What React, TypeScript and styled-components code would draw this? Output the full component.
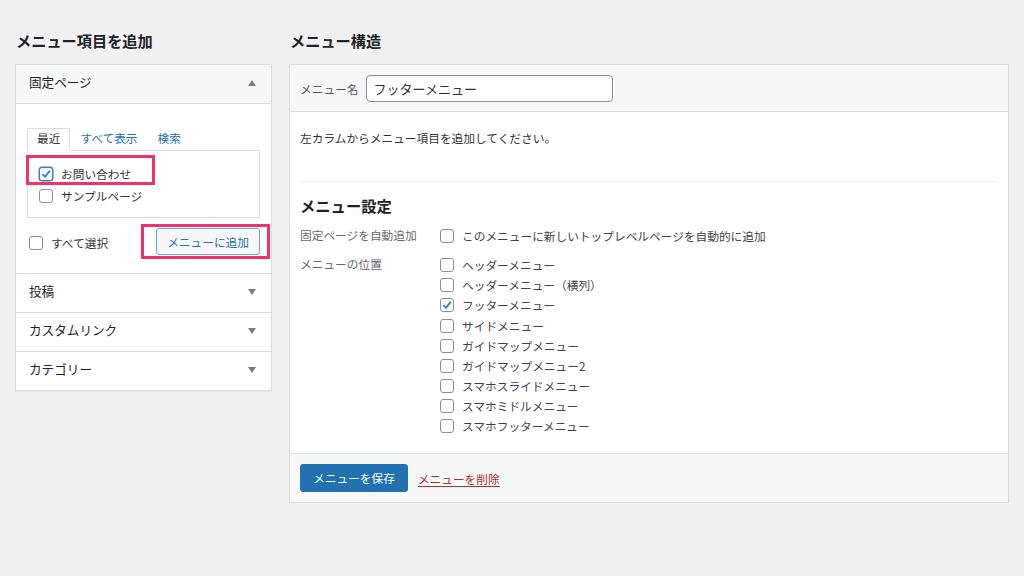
import styled, { createGlobalStyle } from "styled-components";

const GlobalStyle = createGlobalStyle`
  body {
    margin: 0;
    background: #f0f0f1;
    font-family: "Noto Sans CJK JP", "Noto Sans", sans-serif;
    color: #2c3338;
    font-size: 11.7px;
  }
`;

const Page = styled.div`
  display: flex;
  align-items: flex-start;
  gap: 17px;
  padding: 29px 0 0 15px;
`;

const Column = styled.div<{ $width: number }>`
  flex: none;
  width: ${(p) => p.$width}px;
`;

const Heading = styled.h2`
  margin: 0 0 13px;
  padding-left: 1px;
  font-size: 15.2px;
  line-height: 22px;
  font-weight: 600;
  color: #1d2327;
`;

const Panel = styled.div`
  background: #fff;
  border: 1px solid #dcdcde;
  box-shadow: 0 1px 1px rgba(0, 0, 0, 0.04);
`;

/* left column: accordion */

const SectionHeader = styled.div<{ $open?: boolean }>`
  box-sizing: border-box;
  display: flex;
  align-items: center;
  justify-content: space-between;
  height: ${(p) => (p.$open ? 39 : 39)}px;
  padding: 0 15px 4px 13px;
  font-size: 12.6px;
  line-height: 18px;
  color: #1d2327;
  background: ${(p) => (p.$open ? "#f6f7f7" : "#fff")};
  border-top: ${(p) => (p.$open ? "none" : "1px solid #dcdcde")};
  border-bottom: ${(p) => (p.$open ? "1px solid #dcdcde" : "none")};
`;

const Arrow = styled.span<{ $up?: boolean }>`
  width: 0;
  height: 0;
  margin-top: 2px;
  border-left: 4px solid transparent;
  border-right: 4px solid transparent;
  ${(p) =>
    p.$up
      ? "border-bottom: 6px solid #787c82;"
      : "border-top: 6px solid #787c82;"}
`;

const SectionBody = styled.div`
  padding: 24px 11px 18px 11px;
`;

const TabList = styled.div`
  display: flex;
  height: 22px;
`;

const Tab = styled.span<{ $active?: boolean }>`
  box-sizing: border-box;
  height: 23px;
  padding: 0 9px;
  line-height: 18px;
  margin-bottom: -1px;
  position: relative;
  z-index: 1;
  color: ${(p) => (p.$active ? "#2c3338" : "#2271b1")};
  background: ${(p) => (p.$active ? "#fff" : "transparent")};
  border: 1px solid ${(p) => (p.$active ? "#dcdcde" : "transparent")};
  border-bottom-color: ${(p) => (p.$active ? "#fff" : "transparent")};
`;

const TabPanel = styled.div`
  border: 1px solid #dcdcde;
  padding: 12px 11px 10px;
`;

const Item = styled.div`
  position: relative;
  display: flex;
  align-items: center;
  gap: 8px;
  height: 22px;
  line-height: 18px;
  color: #2c3338;
`;

const Highlight = styled.span<{ $l: number; $t: number; $w: number; $h: number }>`
  position: absolute;
  left: ${(p) => p.$l}px;
  top: ${(p) => p.$t}px;
  width: ${(p) => p.$w}px;
  height: ${(p) => p.$h}px;
  box-sizing: border-box;
  border: 3px solid #f2306b;
  pointer-events: none;
`;

const ActionRow = styled.div`
  display: flex;
  align-items: center;
  justify-content: space-between;
  margin-top: 10px;
`;

const SelectAll = styled.label`
  display: flex;
  align-items: center;
  gap: 8px;
  margin: 3px 0 0 2px;
  line-height: 18px;
  color: #2c3338;
`;

const ButtonWrap = styled.span`
  position: relative;
  display: inline-flex;
`;

const SecondaryButton = styled.button`
  box-sizing: border-box;
  height: 27px;
  padding: 0 10px 1px;
  font-family: inherit;
  font-size: 11.7px;
  color: #2271b1;
  background: #f6f7f7;
  border: 1px solid #6ea6d8;
  border-radius: 3px;
`;

/* checkbox */

const Box = styled.span<{ $focus?: boolean }>`
  box-sizing: border-box;
  flex: none;
  display: inline-flex;
  width: 14px;
  height: 14px;
  background: #fff;
  border: ${(p) => (p.$focus ? "1.5px solid #3582c4" : "1px solid #8c8f94")};
  border-radius: 3px;
  box-shadow: ${(p) => (p.$focus ? "0 0 0 0.5px #3582c4" : "none")};
`;

function Check({ checked, focus }: { checked?: boolean; focus?: boolean }) {
  return (
    <Box $focus={focus}>
      {checked && (
        <svg viewBox="0 0 12 12" width="100%" height="100%">
          <path
            d="M2.4 6.2 L5 8.8 L9.9 2.6"
            fill="none"
            stroke="#3582c4"
            strokeWidth="1.9"
            strokeLinejoin="round"
          />
        </svg>
      )}
    </Box>
  );
}

/* right column */

const MenuHeader = styled.div`
  display: flex;
  align-items: center;
  padding: 10px 10px 9px;
  background: #f6f7f7;
  border-bottom: 1px solid #dcdcde;
`;

const FieldLabel = styled.span`
  margin-right: 8px;
  color: #50575e;
`;

const NameInput = styled.input`
  box-sizing: border-box;
  width: 247px;
  height: 27px;
  padding: 0 6px 1px;
  font-family: inherit;
  font-size: 13px;
  color: #2c3338;
  background: #fff;
  border: 1px solid #8c8f94;
  border-radius: 4px;
  outline: none;
`;

const MenuBody = styled.div`
  padding: 15px 10px 17px;
`;

const Intro = styled.p`
  margin: 0;
  line-height: 22px;
  color: #2c3338;
`;

const Divider = styled.hr`
  margin: 32px 0 0;
  border: none;
  border-top: 1px solid #f0f0f1;
`;

const SettingsTitle = styled.h3`
  margin: 12px 0 0;
  font-size: 15.3px;
  line-height: 22px;
  font-weight: 600;
  color: #1d2327;
`;

const SettingRow = styled.div<{ $gap: number }>`
  display: grid;
  grid-template-columns: 140px 1fr;
  margin-top: ${(p) => p.$gap}px;
`;

const SettingLabel = styled.span`
  line-height: 18px;
  color: #646970;
`;

const Options = styled.div`
  display: flex;
  flex-direction: column;
`;

const Option = styled.label`
  display: flex;
  align-items: center;
  gap: 8px;
  height: 20.15px;
  line-height: 18px;
  color: #3c434a;
`;

const MenuFooter = styled.div`
  display: flex;
  align-items: center;
  padding: 10px;
  background: #f6f7f7;
  border-top: 1px solid #dcdcde;
`;

const PrimaryButton = styled.button`
  box-sizing: border-box;
  height: 28px;
  padding: 0 12px 1px;
  font-family: inherit;
  font-size: 11.7px;
  color: #fff;
  background: #2271b1;
  border: 1px solid #2271b1;
  border-radius: 3px;
`;

const DeleteLink = styled.a`
  margin-left: 10px;
  color: #b32d2e;
  text-decoration: underline;
  text-underline-offset: 2px;
`;

const locations = [
  { name: "ヘッダーメニュー" },
  { name: "ヘッダーメニュー（横列）" },
  { name: "フッターメニュー", checked: true },
  { name: "サイドメニュー" },
  { name: "ガイドマップメニュー" },
  { name: "ガイドマップメニュー2" },
  { name: "スマホスライドメニュー" },
  { name: "スマホミドルメニュー" },
  { name: "スマホフッターメニュー" },
];

export default function App() {
  return (
    <>
      <GlobalStyle />
      <Page>
        <Column $width={257}>
          <Heading>メニュー項目を追加</Heading>
          <Panel>
            <SectionHeader $open>
              固定ページ
              <Arrow $up />
            </SectionHeader>
            <SectionBody>
              <TabList>
                <Tab $active>最近</Tab>
                <Tab>すべて表示</Tab>
                <Tab>検索</Tab>
              </TabList>
              <TabPanel>
                <Item>
                  <Check checked focus />
                  お問い合わせ
                  <Highlight $l={-13} $t={-8} $w={129} $h={30} />
                </Item>
                <Item>
                  <Check />
                  サンプルページ
                </Item>
              </TabPanel>
              <ActionRow>
                <SelectAll>
                  <Check />
                  すべて選択
                </SelectAll>
                <ButtonWrap>
                  <SecondaryButton>メニューに追加</SecondaryButton>
                  <Highlight $l={-15} $t={-4} $w={129} $h={35} />
                </ButtonWrap>
              </ActionRow>
            </SectionBody>
            <SectionHeader>
              投稿
              <Arrow />
            </SectionHeader>
            <SectionHeader>
              カスタムリンク
              <Arrow />
            </SectionHeader>
            <SectionHeader>
              カテゴリー
              <Arrow />
            </SectionHeader>
          </Panel>
        </Column>

        <Column $width={720}>
          <Heading>メニュー構造</Heading>
          <Panel>
            <MenuHeader>
              <FieldLabel>メニュー名</FieldLabel>
              <NameInput defaultValue="フッターメニュー" />
            </MenuHeader>
            <MenuBody>
              <Intro>左カラムからメニュー項目を追加してください。</Intro>
              <Divider />
              <SettingsTitle>メニュー設定</SettingsTitle>
              <SettingRow $gap={10}>
                <SettingLabel>固定ページを自動追加</SettingLabel>
                <Options>
                  <Option>
                    <Check />
                    このメニューに新しいトップレベルページを自動的に追加
                  </Option>
                </Options>
              </SettingRow>
              <SettingRow $gap={9}>
                <SettingLabel>メニューの位置</SettingLabel>
                <Options>
                  {locations.map((l) => (
                    <Option key={l.name}>
                      <Check checked={l.checked} />
                      {l.name}
                    </Option>
                  ))}
                </Options>
              </SettingRow>
            </MenuBody>
            <MenuFooter>
              <PrimaryButton>メニューを保存</PrimaryButton>
              <DeleteLink href="#">メニューを削除</DeleteLink>
            </MenuFooter>
          </Panel>
        </Column>
      </Page>
    </>
  );
}
